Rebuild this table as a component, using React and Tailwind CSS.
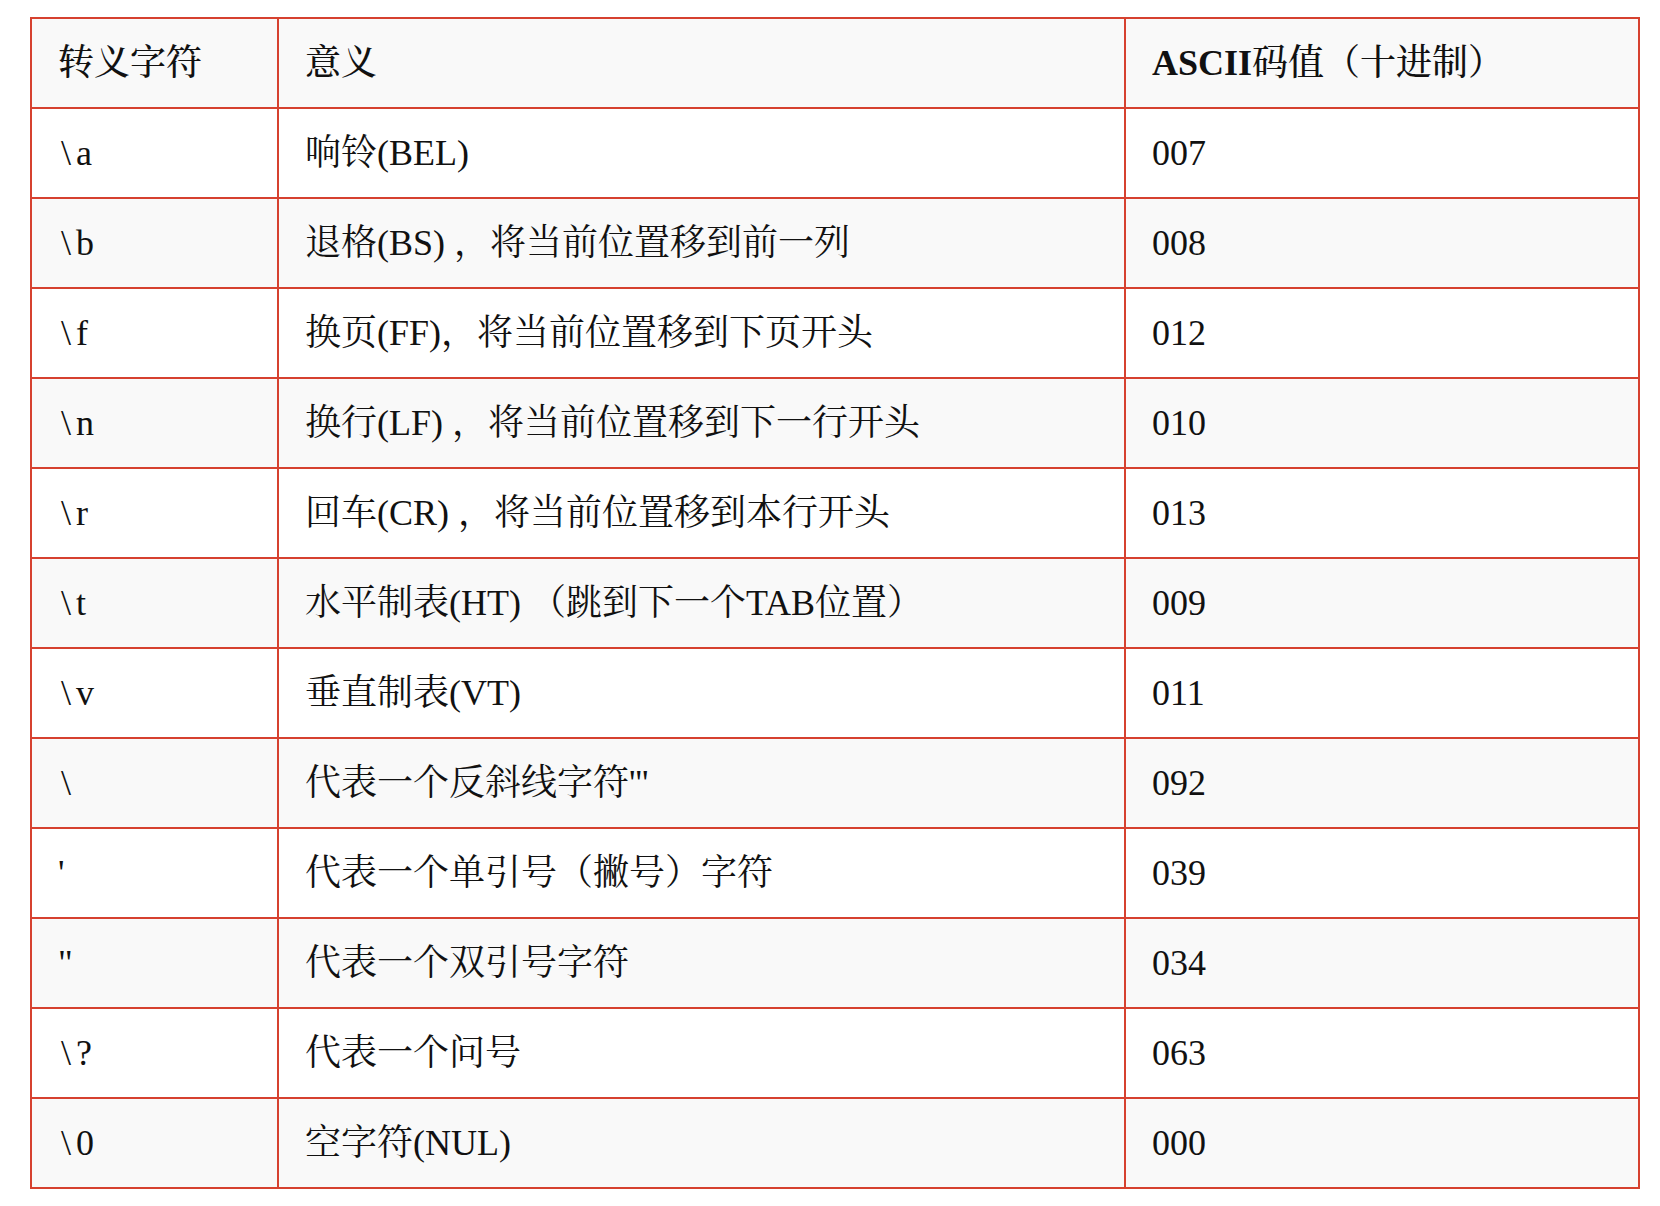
const rows = [
  ['\\a', '响铃(BEL)', '007'],
  ['\\b', '退格(BS) ，将当前位置移到前一列', '008'],
  ['\\f', '换页(FF)，将当前位置移到下页开头', '012'],
  ['\\n', '换行(LF) ，将当前位置移到下一行开头', '010'],
  ['\\r', '回车(CR) ，将当前位置移到本行开头', '013'],
  ['\\t', '水平制表(HT) （跳到下一个TAB位置）', '009'],
  ['\\v', '垂直制表(VT)', '011'],
  ['\\', "代表一个反斜线字符'''", '092'],
  ["'", '代表一个单引号（撇号）字符', '039'],
  ['"', '代表一个双引号字符', '034'],
  ['\\?', '代表一个问号', '063'],
  ['\\0', '空字符(NUL)', '000'],
];

const cell = 'h-[90px] pl-[26px] pr-4 py-0 align-middle text-left border-r-2 border-b-2 border-[#d6412f]';

// the backslash sits a little apart from the letter after it
function Escape({ text }) {
  if (text.startsWith('\\')) {
    return (
      <>
        <span className="pl-[3px] pr-[5px]">\</span>
        {text.slice(1)}
      </>
    );
  }
  return text;
}

export default function App() {
  return (
    <div className="min-h-screen bg-white pt-[17px] pl-[30px]">
      <table className="w-[1610px] table-fixed border-separate border-spacing-0 border-l-2 border-t-2 border-[#d6412f] text-[36px] leading-normal text-[#111] font-['Liberation_Serif','Noto_Serif_CJK_SC','Noto_Sans_CJK_SC',serif]">
        <colgroup>
          <col className="w-[247px]" />
          <col className="w-[847px]" />
          <col />
        </colgroup>
        <thead>
          <tr className="bg-[#f9f9f9]">
            <th className={`${cell} font-medium`}>转义字符</th>
            <th className={`${cell} font-medium`}>意义</th>
            <th className={`${cell} font-medium`}>
              <span className="font-bold">ASCII</span>码值（十进制）
            </th>
          </tr>
        </thead>
        <tbody>
          {rows.map(([esc, meaning, code], i) => (
            <tr key={i} className={i % 2 === 0 ? 'bg-white' : 'bg-[#f9f9f9]'}>
              <td className={cell}>
                <Escape text={esc} />
              </td>
              <td className={cell}>{meaning}</td>
              <td className={cell}>{code}</td>
            </tr>
          ))}
        </tbody>
      </table>
    </div>
  );
}
